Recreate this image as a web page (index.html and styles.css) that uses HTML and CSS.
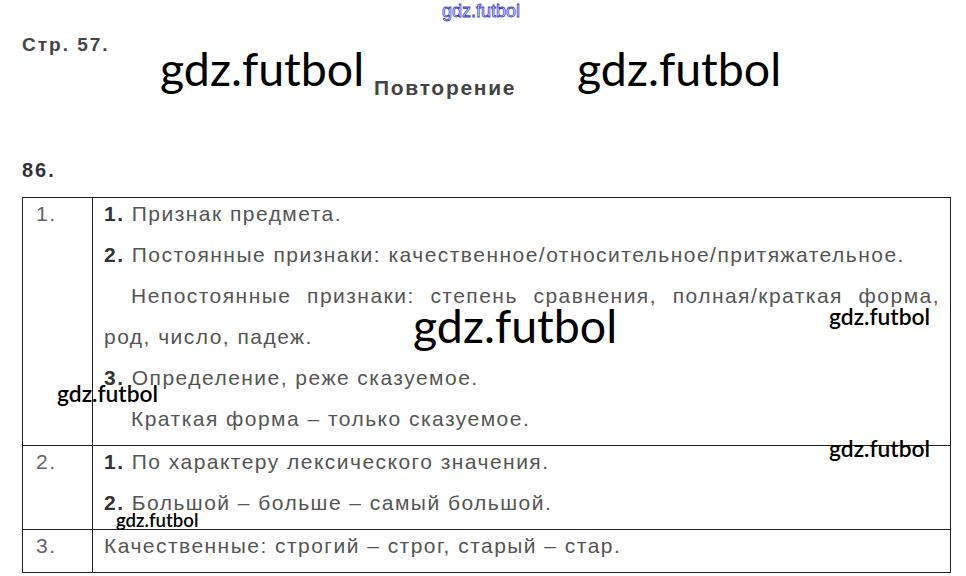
FILE: index.html
```html
<!DOCTYPE html>
<html lang="ru">
<head>
<meta charset="utf-8">
<title>Стр. 57</title>
<link rel="stylesheet" href="styles.css">
</head>
<body>
<div class="page">
  <div class="title">Стр. 57.</div>
  <div class="subtitle">Повторение</div>
  <div class="task">86.</div>
  <div class="tbl">
    <div class="row row1">
      <div class="num"><div class="in">1.</div></div>
      <div class="cell">
        <div class="in">
          <p><b>1.</b> Признак предмета.</p>
          <p><b>2.</b> Постоянные признаки: качественное/относительное/притяжательное.</p>
          <p class="ind just">Непостоянные признаки: степень сравнения, полная/краткая форма, род, число, падеж.</p>
          <p><b>3.</b> Определение, реже сказуемое.</p>
          <p class="ind">Краткая форма – только сказуемое.</p>
        </div>
      </div>
    </div>
    <div class="row row2">
      <div class="num"><div class="in">2.</div></div>
      <div class="cell">
        <div class="in">
          <p><b>1.</b> По характеру лексического значения.</p>
          <p><b>2.</b> Большой – больше – самый большой.</p>
        </div>
      </div>
    </div>
    <div class="row row3">
      <div class="num"><div class="in">3.</div></div>
      <div class="cell">
        <div class="in">
          <p>Качественные: строгий – строг, старый – стар.</p>
        </div>
      </div>
    </div>
  </div>

  <span class="wm wm-top">gdz.futbol</span>
  <span class="wm wm-big wm-b1">gdz.futbol</span>
  <span class="wm wm-big wm-b2">gdz.futbol</span>
  <span class="wm wm-big wm-b3">gdz.futbol</span>
  <span class="wm wm-sm wm-s1">gdz.futbol</span>
  <span class="wm wm-sm wm-s2">gdz.futbol</span>
  <span class="wm wm-sm wm-s3">gdz.futbol</span>
  <span class="wm wm-xs wm-s4">gdz.futbol</span>
</div>
</body>
</html>
```

FILE: styles.css
```css
html, body {
  margin: 0;
  padding: 0;
  background: #fff;
}

.page {
  position: relative;
  width: 966px;
  height: 576px;
  overflow: hidden;
  padding: 33px 0 0 22px;
  box-sizing: border-box;
  font-family: "Liberation Sans", Arial, sans-serif;
}

.title {
  font-size: 19px;
  line-height: 24px;
  letter-spacing: 2px;
  font-weight: bold;
  color: #444;
}

.subtitle {
  margin-top: 19px;
  margin-left: 352px;
  font-size: 21px;
  line-height: 24px;
  letter-spacing: 1.7px;
  font-weight: bold;
  color: #444;
}

.task {
  margin-top: 58px;
  font-size: 20px;
  line-height: 24px;
  letter-spacing: 2px;
  font-weight: bold;
  color: #333;
}

.tbl {
  margin-top: 15px;
  width: 929px;
  border: 1px solid #222;
  box-sizing: border-box;
}

.row {
  display: grid;
  grid-template-columns: 70px 1fr;
  border-top: 1px solid #222;
}

.row:first-child {
  border-top: none;
}

.row1 { height: 247px; }
.row2 { height: 83px; }
.row3 { height: 42px; }

.in {
  margin-top: -5px;
}

.num {
  border-right: 1px solid #222;
  padding-left: 13px;
  font-size: 21px;
  line-height: 41px;
  letter-spacing: 1.5px;
  color: #666;
}

.cell {
  padding: 0 10px 0 11px;
  font-size: 21px;
  line-height: 41px;
  letter-spacing: 1.47px;
  color: #555;
}

.cell p {
  margin: 0;
}

.cell b {
  color: #333;
}

.ind {
  text-indent: 27px;
}

.just {
  text-align: justify;
}

.wm {
  position: absolute;
  font-family: Lato, "Open Sans", sans-serif;
  color: #000;
  white-space: nowrap;
  line-height: 1;
}

.wm-top {
  left: 442px;
  top: 2px;
  font-family: "Liberation Sans", Arial, sans-serif;
  font-size: 18px;
  color: #fff;
  -webkit-text-stroke: 0.8px #3a3ad0;
}

.wm-big {
  font-size: 46.5px;
}

.wm-b1 { left: 160px; top: 45px; }
.wm-b2 { left: 577px; top: 45px; }
.wm-b3 { left: 413px; top: 302px; }

.wm-sm {
  font-size: 22.8px;
  font-weight: 600;
}

.wm-s1 { left: 829px; top: 305px; }
.wm-s2 { left: 829px; top: 437px; }
.wm-s3 { left: 57px; top: 382px; }

.wm-xs {
  font-size: 18.6px;
  font-weight: 600;
  left: 116px;
  top: 511px;
}
```
